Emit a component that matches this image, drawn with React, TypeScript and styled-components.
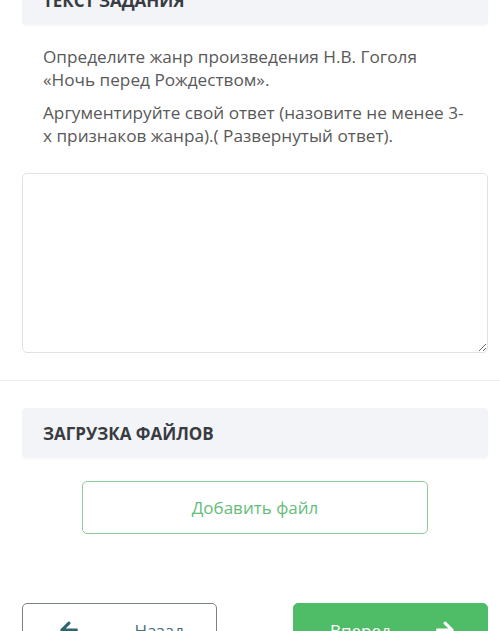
import styled, { createGlobalStyle } from 'styled-components'
import { FaArrowLeft, FaArrowRight } from 'react-icons/fa'

const GlobalStyle = createGlobalStyle`
  html, body {
    margin: 0;
    padding: 0;
    background: #fff;
    font-family: 'Open Sans', 'Noto Sans', sans-serif;
    overflow: hidden;
  }
`

const Page = styled.div`
  margin-top: -25px;
  display: flex;
  flex-direction: column;
`

const Section = styled.section`
  padding: 0 12px 0 22px;
  display: flex;
  flex-direction: column;
`

const SectionHeader = styled.div`
  height: 50px;
  display: flex;
  align-items: center;
  padding: 0 21px;
  background: #f3f4f7;
  border-radius: 4px;
  box-shadow: 0 1px 2px rgba(0, 0, 0, 0.03);
  color: #383b42;
  font-size: 17px;
  font-weight: 700;
  text-transform: uppercase;
`

const TaskText = styled.div`
  padding: 20px 21px 0;
  color: #595959;
  font-size: 17.2px;
  line-height: 23px;

  p {
    margin: 0 0 10px;
  }
`

const Answer = styled.textarea`
  display: block;
  margin-top: 16px;
  height: 180px;
  box-sizing: border-box;
  width: 100%;
  border: 1px solid #e2e2e2;
  border-radius: 5px;
  background: #fff;
  font-family: inherit;
  font-size: 16px;
  outline: none;
`

const Divider = styled.hr`
  margin: 27px 0 27px;
  border: none;
  border-top: 1px solid #ededed;
`

const AddFile = styled.button`
  align-self: center;
  margin-top: 23px;
  width: 346px;
  height: 53px;
  border: 1px solid #8ccb9a;
  border-radius: 5px;
  background: #fff;
  color: #66bd79;
  font-family: inherit;
  font-size: 17px;
  cursor: pointer;
`

const Nav = styled.div`
  margin-top: 69px;
  padding: 0 12px 0 22px;
  display: flex;
  justify-content: space-between;
`

const NavButton = styled.button<{ $primary?: boolean }>`
  width: 195px;
  height: 54px;
  box-sizing: border-box;
  display: flex;
  align-items: center;
  justify-content: space-between;
  padding: 0 32px 0 36px;
  border-radius: 5px;
  font-family: inherit;
  font-size: 17px;
  cursor: pointer;
  border: 1px solid ${(p) => (p.$primary ? '#4fbd67' : '#7b8189')};
  background: ${(p) => (p.$primary ? '#4fbd67' : '#fff')};
  color: ${(p) => (p.$primary ? '#fff' : '#46707a')};

  svg {
    color: ${(p) => (p.$primary ? '#fff' : '#2b6672')};
  }
`

export default function App() {
  return (
    <>
      <GlobalStyle />
      <Page>
        <Section>
          <SectionHeader>Текст задания</SectionHeader>
          <TaskText>
            <p>Определите жанр произведения Н.В. Гоголя «Ночь перед Рождеством».</p>
            <p>Аргументируйте свой ответ (назовите не менее 3-х признаков жанра).( Развернутый ответ).</p>
          </TaskText>
          <Answer />
        </Section>
        <Divider />
        <Section>
          <SectionHeader>Загрузка файлов</SectionHeader>
          <AddFile>Добавить файл</AddFile>
        </Section>
        <Nav>
          <NavButton>
            <FaArrowLeft size={20} />
            <span>Назад</span>
          </NavButton>
          <NavButton $primary>
            <span>Вперед</span>
            <FaArrowRight size={20} />
          </NavButton>
        </Nav>
      </Page>
    </>
  )
}
